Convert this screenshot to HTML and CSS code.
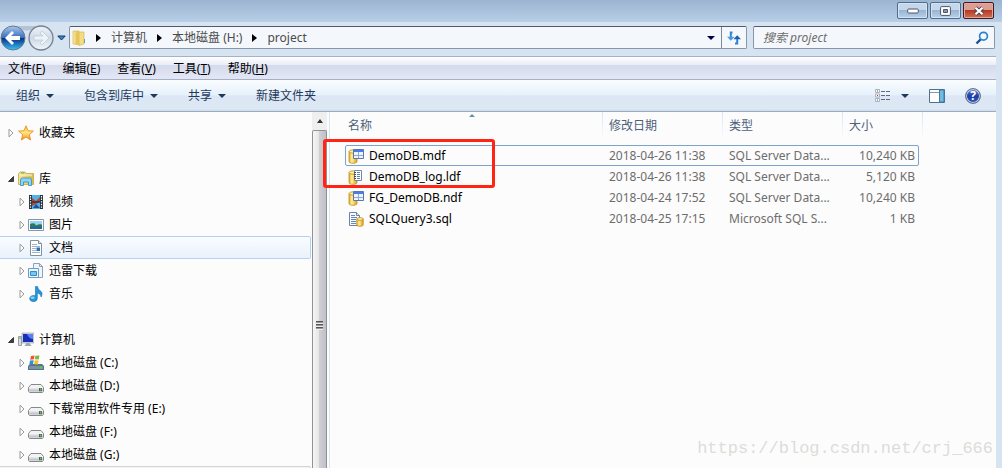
FILE: index.html
```
<!DOCTYPE html>
<html lang="zh-CN">
<head>
    <meta charset="UTF-8">
    <meta name="viewport" content="width=device-width, initial-scale=1.0">
    <title>project</title>
    <link rel="stylesheet" href="styles.css">
</head>
<body>
    <!-- 公用图标 -->
    <svg class="sprite" aria-hidden="true">
        <defs>
            <linearGradient id="gold" x1="0" x2="1"><stop offset="0" stop-color="#e8ab20"/><stop offset=".35" stop-color="#fff0a0"/><stop offset="1" stop-color="#e0a010"/></linearGradient>
            <linearGradient id="metal" x1="0" x2="0" y1="0" y2="1"><stop offset="0" stop-color="#f6f6f8"/><stop offset="1" stop-color="#b4b6bc"/></linearGradient>
            <linearGradient id="navy" x1="0" x2="0" y1="0" y2="1"><stop offset="0" stop-color="#a9c8ec"/><stop offset=".48" stop-color="#3a70bd"/><stop offset=".52" stop-color="#0b3286"/><stop offset="1" stop-color="#35c4f8"/></linearGradient>
            <linearGradient id="pale" x1="0" x2="0" y1="0" y2="1"><stop offset="0" stop-color="#eef3f8"/><stop offset=".5" stop-color="#cfdae6"/><stop offset="1" stop-color="#eff5fa"/></linearGradient>
            <linearGradient id="folder" x1="0" x2="1"><stop offset="0" stop-color="#f8e79a"/><stop offset="1" stop-color="#dcb94c"/></linearGradient>
            <linearGradient id="star" x1="0" x2="0" y1="0" y2="1"><stop offset="0" stop-color="#ffc22a"/><stop offset=".5" stop-color="#ffe680"/><stop offset="1" stop-color="#f78a18"/></linearGradient>
        </defs>
        <symbol id="closed" viewBox="0 0 6 10"><path d="M1 1.2 5 5 1 8.8z" fill="#fff" stroke="#999"/></symbol>
        <symbol id="open" viewBox="0 0 6 6"><path d="M5.5.5v5H.5z" fill="#404040" stroke="#222" stroke-width=".8"/></symbol>
        <symbol id="down" viewBox="0 0 8 4"><path d="M0 0h8L4 4z" fill="currentColor"/></symbol>
        <symbol id="right" viewBox="0 0 5 8"><path d="M0 0v8l5-4z" fill="#000"/></symbol>
        <symbol id="drive" viewBox="0 0 16 16">
            <path d="M3 6.5h10l2.5 3v4l-1 1h-13l-1-1v-4z" fill="#f3f3f5" stroke="#85888e"/>
            <path d="M1 9.5h14v4H1z" fill="url(#metal)"/>
            <path d="M11 10h3v3.2h-3z" fill="#535b55"/><path d="M12 10.5h1.4v2H12z" fill="#4ade2c"/>
        </symbol>
        <symbol id="mdf" viewBox="0 0 16 16">
            <path d="M1 3.5v10c0 2.4 8 2.4 8 0v-10z" fill="url(#gold)" stroke="#b8820f" stroke-width=".7"/>
            <ellipse cx="5" cy="3.5" rx="4" ry="1.7" fill="#ffeda0" stroke="#b8820f" stroke-width=".7"/>
            <path d="M5.5 1.5h10v9h-10z" fill="#eef4ff" stroke="#5a78ac"/>
            <path d="M6 2h9v2H6z" fill="#4a7ee0"/>
            <path d="M6 7.5h9M10.5 4v6" stroke="#8ba9d9"/>
        </symbol>
        <symbol id="ldf" viewBox="0 0 16 16">
            <path d="M1 3.5v10c0 2.4 8 2.4 8 0v-10z" fill="url(#gold)" stroke="#b8820f" stroke-width=".7"/>
            <ellipse cx="5" cy="3.5" rx="4" ry="1.7" fill="#ffeda0" stroke="#b8820f" stroke-width=".7"/>
            <path d="M6.5 1.5h7v10h-7z" fill="#fff" stroke="#7187a8"/>
            <path d="M9 3.5h3M9 5.5h3M9 7.5h3M9 9.5h3" stroke="#5b7fb8"/><path d="M6 3.5h2M6 5.5h2M6 7.5h2M6 9.5h2" stroke="#4a4a4a"/>
        </symbol>
        <symbol id="sql" viewBox="0 0 16 16">
            <path d="M1.5 1.5h7l3 3v10h-10z" fill="#f7faff" stroke="#6f819d"/><path d="M8.5 1.5v3h3" fill="#d7e3f4" stroke="#6f819d"/>
            <path d="M3 4.5h4M3 6.5h6M3 8.5h5M3 10.5h5M3 12.5h5" stroke="#6486b8"/>
            <path d="M8.8 8v5.8c0 2 6.4 2 6.4 0V8z" fill="url(#gold)" stroke="#b8820f" stroke-width=".7"/>
            <ellipse cx="12" cy="8" rx="3.2" ry="1.4" fill="#ffeda0" stroke="#b8820f" stroke-width=".7"/>
        </symbol>
    </svg>

    <div class="window">
        <header class="title-bar">
            <button class="win-btn" aria-label="最小化">
                <svg width="12" height="6" viewBox="0 0 12 6"><rect x=".7" y="1" width="10.6" height="4" rx="1" fill="#fff" stroke="#4c5568"/></svg>
            </button>
            <button class="win-btn" aria-label="最大化">
                <svg width="11" height="10" viewBox="0 0 11 10"><rect x=".6" y=".6" width="9.8" height="8.8" rx="1" fill="#fff" stroke="#4c5568"/><path d="M3.5 3.5h4v3h-4z" fill="#7e9bbd" stroke="#4c5568"/></svg>
            </button>
            <button class="win-btn close" aria-label="关闭">
                <svg width="12" height="10" viewBox="0 0 12 10"><path d="m2.5 1.8 7 6.4m0-6.4-7 6.4" stroke="#4d4351" stroke-width="4"/><path d="m2.5 1.8 7 6.4m0-6.4-7 6.4" stroke="#fff" stroke-width="2.2"/></svg>
            </button>
        </header>

        <div class="frame">
            <nav class="nav-bar">
                <div class="history">
                    <svg width="54" height="26" viewBox="0 0 54 26">
                        <path d="M12 1h30l-8 3q-7 3-14 0z" fill="#b4c4d6"/>
                        <circle cx="13" cy="13" r="12" fill="url(#navy)" stroke="#69788c"/>
                        <path d="m12 6-7 7 7 7 2-2-3-3h9v-4h-9l3-3z" fill="#fff"/>
                        <circle cx="41" cy="13" r="12" fill="url(#pale)" stroke="#75818f" stroke-width="1.3"/>
                        <path d="m42 6 7 7-7 7-2-2 3-3h-9v-4h9l-3-3z" fill="#eef3f8" stroke="#bcc7d3" stroke-width=".7"/>
                    </svg>
                    <svg class="recent" width="9" height="6" viewBox="0 0 9 6"><path d="M.8 1h7.4L4.5 5z" fill="#3a86c8" stroke="#12376c"/></svg>
                </div>
                <div class="address">
                    <svg width="14" height="16" viewBox="0 0 14 16">
                        <path d="M1 1h6l1 14-7-1z" fill="url(#folder)" stroke="#dcbc58" stroke-width=".7"/>
                        <path d="M7 2h5v12l-5 1.5z" fill="#f4dc84" stroke="#dcb84e" stroke-width=".7"/>
                        <path d="m4 3 3-1v13l-3-1z" fill="#e6c455"/><path d="M12.5 9v4" stroke="#55a4d8"/>
                    </svg>
                    <svg width="5" height="8"><use href="#right"/></svg>
                    <a href="#">计算机</a>
                    <svg width="5" height="8"><use href="#right"/></svg>
                    <a href="#">本地磁盘 (H:)</a>
                    <svg width="5" height="8"><use href="#right"/></svg>
                    <a href="#">project</a>
                    <button class="history-drop" aria-label="以前的位置"><svg width="8" height="4"><use href="#down"/></svg></button>
                    <button class="refresh" aria-label="刷新">
                        <svg width="16" height="14" viewBox="0 0 16 14"><path d="M6.5 1.5H4.8v5M9 12.5h2.2v-5" fill="none" stroke="#2f84d0" stroke-width="2"/><path d="M1 5.8h7.6L4.8 9.8z" fill="#4a9be0"/><path d="M7.4 8.2H15l-3.8-4z" fill="#1c5fae"/></svg>
                    </button>
                </div>
                <label class="search">
                    <input type="text" placeholder="搜索 project" aria-label="搜索 project">
                    <svg width="14" height="14" viewBox="0 0 14 14"><path d="M6 8 1.5 12.5" stroke="#1d4b94" stroke-width="2.4"/><circle cx="8.5" cy="5.2" r="3.9" fill="#f3faff" stroke="#2f83c9" stroke-width="1.7"/></svg>
                </label>
            </nav>

            <div class="menu-bar">
                <button>文件(<u>F</u>)</button>
                <button>编辑(<u>E</u>)</button>
                <button>查看(<u>V</u>)</button>
                <button>工具(<u>T</u>)</button>
                <button>帮助(<u>H</u>)</button>
            </div>

            <div class="toolbar">
                <button>组织 <svg width="8" height="4"><use href="#down"/></svg></button>
                <button>包含到库中 <svg width="8" height="4"><use href="#down"/></svg></button>
                <button>共享 <svg width="8" height="4"><use href="#down"/></svg></button>
                <button>新建文件夹</button>
                <div class="tools">
                    <button aria-label="更改视图">
                        <svg width="16" height="14" viewBox="0 0 16 14">
                            <path d="M.5.5h4v3h-4zM.5 5h4v3h-4zM.5 9.5h4v3h-4z" fill="#fff" stroke="#98a1ad" stroke-width=".8"/>
                            <path d="M2 1.5h1v1H2z" fill="#287c48"/><path d="M2 6h1v1H2z" fill="#e02020"/><path d="M2 10.5h1v1H2z" fill="#2458c8"/>
                            <path d="M6 2.5h4m1 0h4M6 6.5h4m1 0h4M6 10.5h4m1 0h4" stroke="#5b6b83"/>
                        </svg>
                        <svg class="view-arrow" width="8" height="4"><use href="#down"/></svg>
                    </button>
                    <button aria-label="显示预览窗格">
                        <svg width="16" height="14" viewBox="0 0 16 14"><path d="M.5.5h15v13H.5z" fill="#fff" stroke="#566f8b"/><path d="M1 3.5h9" stroke="#8197ae"/><path d="M10.5 1H15v12h-4.5z" fill="#73bce0" stroke="#3d7ba5"/></svg>
                    </button>
                    <button class="help" aria-label="帮助"><span>?</span></button>
                </div>
            </div>

            <div class="content">
                <aside class="sidebar">
                    <ul class="tree">
                        <li class="root">
                            <svg class="toggle" width="6" height="10"><use href="#closed"/></svg>
                            <svg width="16" height="16" viewBox="0 0 16 16"><path d="m8 .8 2.1 4.9 5.3.4-4 3.5 1.2 5.4L8 12.1 3.4 15l1.2-5.4-4-3.5 5.3-.4z" fill="url(#star)" stroke="#e8861c" stroke-width=".8"/></svg>
                            <span>收藏夹</span>
                        </li>
                        <li class="root spaced">
                            <svg class="toggle" width="6" height="6"><use href="#open"/></svg>
                            <svg width="16" height="16" viewBox="0 0 16 16"><path d="M.5 2.5 2 1h5l1 1.5h7.5v11H.5z" fill="url(#folder)" stroke="#c7a548" stroke-width=".8"/><path d="M2 4h12" stroke="#fff9d0"/><path d="M3 2h3" stroke="#56b848"/><path d="M2.5 14.5V9q0-2 2-2h7q2 0 2 2v5.5h-3V11h-5v3.5z" fill="#8ed5f2" stroke="#3b94c2" stroke-width=".9"/></svg>
                            <span>库</span>
                        </li>
                        <li>
                            <svg class="toggle" width="6" height="10"><use href="#closed"/></svg>
                            <svg width="16" height="16" viewBox="0 0 16 16"><path d="M1 1h14v14H1z" fill="#28323c"/><path d="M4 1h8v14H4z" fill="#4eb2e8"/><path d="m4 4 4 3 4-4v5L8 10l-4 2z" fill="#a34a3b"/><path d="M4 8h8" stroke="#172532"/><path d="m5 14 3-4 4 4z" fill="#214f9c"/><path d="M2.5 2v13M13.5 2v13" stroke="#fff" stroke-width="1.2" stroke-dasharray="1.4 1.2"/></svg>
                            <span>视频</span>
                        </li>
                        <li>
                            <svg class="toggle" width="6" height="10"><use href="#closed"/></svg>
                            <svg width="16" height="16" viewBox="0 0 16 16"><path d="M.5 2.5h15v11H.5z" fill="#fff" stroke="#8995a4"/><path d="M2 4h12v8H2z" fill="#98d5f4"/><path d="M2 7q5-2 6 1.5 3-2 6-1V10H2z" fill="#2e7c55"/><path d="M2 9.5h12V12H2z" fill="#24679c"/></svg>
                            <span>图片</span>
                        </li>
                        <li class="active">
                            <svg class="toggle" width="6" height="10"><use href="#closed"/></svg>
                            <svg width="16" height="16" viewBox="0 0 16 16"><path d="M2.5.5h8l3 3v12h-11z" fill="#fff" stroke="#85909d"/><path d="M10.5.5v3h3" fill="#dde5ee" stroke="#85909d"/><path d="M4 4.5h5M4 6.5h8M4 8.5h4M4 10.5h4M4 12.5h8" stroke="#98a9c3" stroke-width=".9"/><path d="M8.5 7.5H12V11H8.5z" fill="#246fc0"/></svg>
                            <span>文档</span>
                        </li>
                        <li>
                            <svg class="toggle" width="6" height="10"><use href="#closed"/></svg>
                            <svg width="16" height="16" viewBox="0 0 16 16"><path d="M5.5.5h6l3 3v11h-9z" fill="#eef5fb" stroke="#8ca2b8"/><path d="M11.5.5v3h3" fill="none" stroke="#8ca2b8"/><path d="M.5 5.5h10v9H.5z" fill="#eaf6fd" stroke="#6e9cc2"/><path d="M2.5 8.5h6v4h-6z" fill="#79c6f1" stroke="#338cc6"/></svg>
                            <span>迅雷下载</span>
                        </li>
                        <li>
                            <svg class="toggle" width="6" height="10"><use href="#closed"/></svg>
                            <svg width="16" height="16" viewBox="0 0 16 16"><path d="M7.5.5h2q.2 2.8 2.8 4.3 3 2 .8 6.2.2-3-3.8-4v5.5c0 4.3-7.6 3.8-7.6.2 0-2.6 3-4 5.8-2.9z" fill="#2495dc" stroke="#176da9" stroke-width=".6"/><ellipse cx="4.6" cy="11.7" rx="2" ry="1.2" fill="#82d2fa"/></svg>
                            <span>音乐</span>
                        </li>
                        <li class="root spaced">
                            <svg class="toggle" width="6" height="6"><use href="#open"/></svg>
                            <svg width="16" height="16" viewBox="0 0 16 16"><path d="M.5 4.5h3v9h-3z" fill="#d9dce1" stroke="#858b94" stroke-width=".8"/><path d="M1.2 6h1.6" stroke="#38b63a"/><path d="M4 1h12v10H4z" fill="#d8dce4" stroke="#8e949f" stroke-width=".6"/><path d="M5 2h10v8H5z" fill="#152fb9"/><path d="M9 2h6v5q-4 0-6-5" fill="#617cf0"/><path d="M8.5 11h3l2 3h-7z" fill="#a3a7b0"/></svg>
                            <span>计算机</span>
                        </li>
                        <li>
                            <svg class="toggle" width="6" height="10"><use href="#closed"/></svg>
                            <svg width="16" height="16" viewBox="0 0 16 16"><path d="M2 9h12l2 2v4H0v-4z" fill="#56738a"/><path d="M1 11h14v3H1z" fill="#7794a7"/><path d="M12 11.5h2v2h-2z" fill="#43e12e"/><path d="m3 .9 3.5-.4-.6 3.8-3.7.5z" fill="#e9572b"/><path d="m7.4.7 4-.1-.7 4-3.9-.3z" fill="#79b944"/><path d="m2 5.6 3.7-.4L5 9l-3.7.5z" fill="#3b8ad8"/><path d="m6.7 5.2 4 .3-.8 4-3.8-.3z" fill="#f4c22b"/></svg>
                            <span>本地磁盘 (C:)</span>
                        </li>
                        <li>
                            <svg class="toggle" width="6" height="10"><use href="#closed"/></svg>
                            <svg width="16" height="16"><use href="#drive"/></svg>
                            <span>本地磁盘 (D:)</span>
                        </li>
                        <li>
                            <svg class="toggle" width="6" height="10"><use href="#closed"/></svg>
                            <svg width="16" height="16"><use href="#drive"/></svg>
                            <span>下载常用软件专用 (E:)</span>
                        </li>
                        <li>
                            <svg class="toggle" width="6" height="10"><use href="#closed"/></svg>
                            <svg width="16" height="16"><use href="#drive"/></svg>
                            <span>本地磁盘 (F:)</span>
                        </li>
                        <li>
                            <svg class="toggle" width="6" height="10"><use href="#closed"/></svg>
                            <svg width="16" height="16"><use href="#drive"/></svg>
                            <span>本地磁盘 (G:)</span>
                        </li>
                        <li class="selected"></li>
                    </ul>
                    <div class="scrollbar">
                        <div class="scroll-up"><svg width="6" height="4" viewBox="0 0 6 4"><path d="M0 4h6L3 0z" fill="#333"/></svg></div>
                        <div class="thumb"><div class="grip"></div></div>
                    </div>
                </aside>

                <main class="files">
                    <table>
                        <colgroup><col class="col-name"><col class="col-date"><col class="col-type"><col class="col-size"></colgroup>
                        <thead>
                            <tr><th class="sorted">名称</th><th>修改日期</th><th>类型</th><th>大小</th></tr>
                        </thead>
                        <tbody>
                            <tr class="focused">
                                <td><div class="file"><svg width="16" height="16"><use href="#mdf"/></svg>DemoDB.mdf</div></td>
                                <td>2018-04-26 11:38</td><td>SQL Server Data...</td><td>10,240 KB</td>
                            </tr>
                            <tr>
                                <td><div class="file"><svg width="16" height="16"><use href="#ldf"/></svg>DemoDB_log.ldf</div></td>
                                <td>2018-04-26 11:38</td><td>SQL Server Data...</td><td>5,120 KB</td>
                            </tr>
                            <tr>
                                <td><div class="file"><svg width="16" height="16"><use href="#mdf"/></svg>FG_DemoDB.ndf</div></td>
                                <td>2018-04-24 17:52</td><td>SQL Server Data...</td><td>10,240 KB</td>
                            </tr>
                            <tr>
                                <td><div class="file"><svg width="16" height="16"><use href="#sql"/></svg>SQLQuery3.sql</div></td>
                                <td>2018-04-25 17:15</td><td>Microsoft SQL S...</td><td>1 KB</td>
                            </tr>
                        </tbody>
                    </table>
                    <div class="highlight"></div>
                    <div class="watermark">https://blog.csdn.net/crj_666</div>
                </main>
            </div>
        </div>
    </div>
</body>
</html>
```
FILE: styles.css
```
:root {
    --glass: #d6e4f2;
    --line: #a5b1c9;
    --toolbar-text: #1e395b;
    --text-muted: #6d6d6d;
    --pane: #fcfcfc;
}

* {
    margin: 0;
    padding: 0;
    box-sizing: border-box;
}

body {
    font-family: "Noto Sans", "Noto Sans CJK SC", sans-serif;
    font-size: 12px;
    line-height: 16px;
    color: #000;
}

button {
    font: inherit;
    color: inherit;
    background: none;
    border: none;
}

svg {
    display: block;
    flex: none;
}

.sprite {
    position: absolute;
    width: 0;
    height: 0;
}

.window {
    height: 100vh;
    display: flex;
    flex-direction: column;
    overflow: hidden;
    background: var(--glass);
}

/* 标题栏 */
.title-bar {
    height: 22px;
    flex: none;
    display: flex;
    justify-content: flex-end;
    gap: 2px;
    padding: 2px 8px 3px;
    background: linear-gradient(#9bb4d0, #b7cfe8);
}

.win-btn {
    width: 31px;
    display: flex;
    align-items: center;
    justify-content: center;
    border: 1px solid #536b8b;
    border-radius: 2px;
    background: linear-gradient(#c5d7ea 45%, #9bb5d1 50%, #b9d1e9);
    box-shadow: inset 0 0 0 1px #d5e4f3;
}

.win-btn.close {
    border-color: #4a1720;
    background: linear-gradient(#dc9d92 45%, #b53a25 50%, #cf7153);
    box-shadow: inset 0 0 0 1px #e3a899;
}

.frame {
    flex: 1;
    min-height: 0;
    display: flex;
    flex-direction: column;
    margin-right: 6px;
}

/* 地址栏 */
.nav-bar {
    height: 34px;
    flex: none;
    display: flex;
    align-items: center;
    gap: 6px;
    padding: 0 1px 4px 0;
}

.history {
    width: 63px;
    display: flex;
    align-items: center;
    gap: 3px;
    padding-top: 2px;
}

.address,
.search {
    height: 23px;
    margin-top: 1px;
    display: flex;
    align-items: center;
    background: #f4f8fc;
    border: 1px solid #8996a8;
    border-top-color: #515b69;
    border-radius: 2px;
    color: #4b4b4b;
}

.address {
    flex: 1;
    gap: 10px;
    padding-left: 2px;
}

.address a {
    color: #4b4b4b;
    text-decoration: none;
}

.history-drop {
    margin-left: auto;
    padding: 6px;
    margin-right: -10px;
    color: #00004b;
}

.refresh {
    width: 25px;
    height: 21px;
    display: flex;
    align-items: center;
    justify-content: center;
    border-left: 1px solid #7c899b;
}

.search {
    width: 242px;
    padding: 0 5px 0 9px;
}

.search input {
    flex: 1;
    min-width: 0;
    font: inherit;
    font-style: italic;
    background: none;
    border: none;
    outline: none;
}

.search input::placeholder {
    color: #6d6d6d;
    opacity: 1;
}

/* 菜单栏 */
.menu-bar {
    height: 24px;
    flex: none;
    display: flex;
    align-items: center;
    gap: 17px;
    padding: 2px 0 0 8px;
    border-top: 1px solid var(--line);
    border-bottom: 1px solid var(--line);
    background: linear-gradient(#fff, #e9edf7 35%, #d5daec 38%, #e3e7f5);
}

.toolbar {
    height: 32px;
    flex: none;
    display: flex;
    align-items: center;
    gap: 30px;
    padding: 0 15px 0 16px;
    color: var(--toolbar-text);
    border-bottom: 1px solid #9dabc0;
    background: linear-gradient(#fafdff, #e6f1fb 48%, #dce6f4 52%, #dde8f5 92%, #d0dceb);
}

.toolbar button {
    display: flex;
    align-items: center;
    gap: 6px;
}

.tools {
    display: flex;
    align-items: center;
    gap: 20px;
    margin-left: auto;
}

.view-arrow {
    margin-left: 4px;
}

.toolbar .help {
    width: 16px;
    height: 16px;
    justify-content: center;
    border-radius: 50%;
    border: 1px solid #70747e;
    background: linear-gradient(#7391dc, #1c3da6 50%, #2858c4);
    box-shadow: inset 0 0 0 1px #c9d0e2;
    color: #fff;
    font-weight: bold;
}

.content {
    flex: 1;
    min-height: 0;
    display: flex;
    background: var(--pane);
}

/* 导航窗格 */
.sidebar {
    width: 330px;
    flex: none;
    display: flex;
    padding-right: 2px;
    border-right: 1px solid #d9e5f1;
}

.tree {
    flex: 1;
    list-style: none;
    padding: 9px 1px 0 0;
}

.tree li {
    height: 23px;
    display: flex;
    align-items: center;
    gap: 5px;
    padding-left: 19px;
    border: 1px solid transparent;
    border-left: none;
    border-radius: 0 2px 2px 0;
}

.tree .toggle {
    margin-right: -2px;
}

.tree .root {
    padding-left: 8px;
}

.tree .root .toggle {
    margin-right: -1px;
}

.tree .spaced {
    margin-top: 23px;
}

.tree .active {
    border-color: #b3d3f5;
    background: linear-gradient(#fafcff, #eaf2fc);
}

.tree .selected {
    border-color: #d4d4d4;
    background: #f4f4f4;
}

.scrollbar {
    width: 15px;
    display: flex;
    flex-direction: column;
    background: #efefef;
}

.scroll-up {
    height: 18px;
    display: flex;
    align-items: center;
    justify-content: center;
}

.thumb {
    flex: 1;
    display: flex;
    justify-content: center;
    padding-top: 190px;
    border: 1px solid #929292;
    border-bottom: none;
    border-radius: 2px 2px 0 0;
    background: linear-gradient(90deg, #f6f6f6, #e6e6e8 45%, #cfcfd5 50%, #bfc0c8);
}

.grip {
    width: 7px;
    height: 9px;
    background: repeating-linear-gradient(#555 0 1px, #999 1px 2px, #eee 2px 3px);
}

/* 文件列表 */
.files {
    flex: 1;
    min-width: 0;
    position: relative;
    padding-left: 15px;
}

table {
    width: 578px;
    table-layout: fixed;
    border-collapse: separate;
    border-spacing: 0;
}

.col-name { width: 258px; }
.col-date { width: 120px; }
.col-type { width: 120px; }
.col-size { width: 80px; }

th {
    height: 26px;
    padding: 2px 0 0 6px;
    text-align: left;
    font-weight: normal;
    color: #4c607a;
    border-right: 1px solid;
    border-image: linear-gradient(#d5e5f5, var(--pane)) 1;
}

th.sorted {
    position: relative;
    padding-left: 3px;
}

/* 升序箭头 */
th.sorted::after {
    content: '';
    position: absolute;
    top: 2px;
    left: 50%;
    margin-left: -5px;
    border: 3px solid transparent;
    border-top: none;
    border-bottom: 3px solid #5c93b5;
}

tbody::before {
    content: '';
    display: block;
    height: 7px;
}

td {
    height: 21px;
    padding-left: 6px;
    white-space: nowrap;
    color: var(--text-muted);
}

td:first-child {
    padding-left: 3px;
    color: #000;
}

td:last-child {
    padding: 0 8px 0 0;
    text-align: right;
}

.file {
    display: flex;
    align-items: center;
    gap: 5px;
}

.focused {
    position: relative;
}

.focused::after {
    content: '';
    position: absolute;
    inset: 0 4px 0 0;
    border: 1px solid #7da2ce;
    border-radius: 2px;
}

.highlight {
    position: absolute;
    top: 27px;
    left: -7px;
    width: 172px;
    height: 49px;
    border: 3px solid #ff2414;
    border-radius: 3px;
}

.watermark {
    position: absolute;
    right: 3px;
    bottom: 9px;
    font-family: "Liberation Mono", monospace;
    font-size: 17px;
    line-height: 20px;
    color: #dcdcd9;
}
```
